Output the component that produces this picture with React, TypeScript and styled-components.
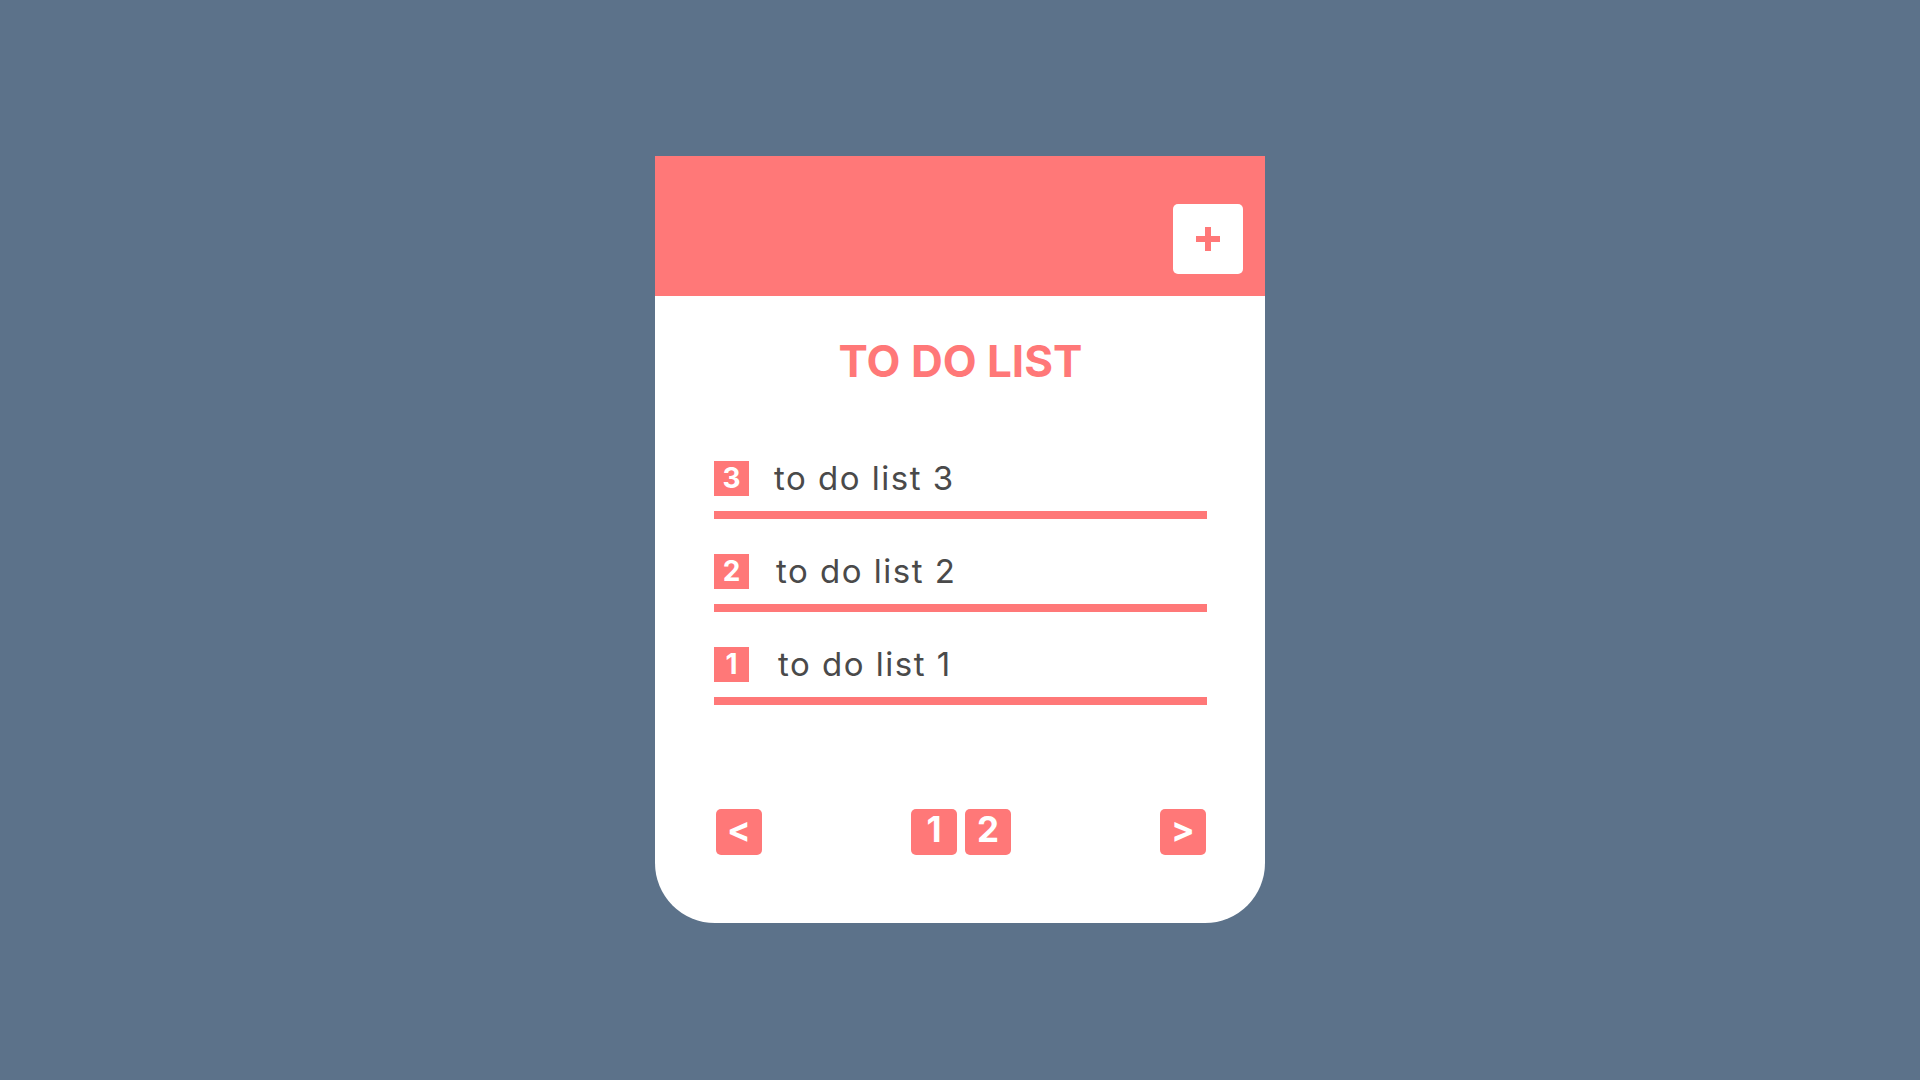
import React from "react";
import styled, { createGlobalStyle } from "styled-components";

const CORAL = "#ff7878";

const Global = createGlobalStyle`
  html, body { margin: 0; padding: 0; }
  body {
    background: #5c728a;
    font-family: Inter, "Noto Sans", sans-serif;
  }
`;

const Page = styled.div`
  min-height: 100vh;
  display: flex;
  align-items: center;
  justify-content: center;
`;

const Card = styled.div`
  width: 610px;
  background: #ffffff;
  border-radius: 0 0 60px 60px;
  overflow: hidden;
  display: flex;
  flex-direction: column;
  margin-top: -1px;
`;

const Header = styled.div`
  height: 140px;
  background: ${CORAL};
  display: flex;
  justify-content: flex-end;
  align-items: flex-end;
  padding: 0 22px 22px 0;
  box-sizing: border-box;
`;

const AddButton = styled.button`
  width: 70px;
  height: 70px;
  border: none;
  border-radius: 5px;
  background: #ffffff;
  padding: 0;
  display: flex;
  align-items: center;
  justify-content: center;
  cursor: pointer;
`;

const Body = styled.div`
  padding: 43px 58px 68px 59px;
  display: flex;
  flex-direction: column;
`;

const Title = styled.h1`
  margin: 0;
  font-size: 44px;
  line-height: 1;
  font-weight: 700;
  color: ${CORAL};
  text-align: center;
`;

const List = styled.ul`
  list-style: none;
  margin: 78px 0 0;
  padding: 0;
  display: flex;
  flex-direction: column;
  gap: 35px;
`;

const Item = styled.li`
  display: flex;
  align-items: center;
  gap: 25px;
  padding-bottom: 15px;
  border-bottom: 8px solid ${CORAL};
`;

const Badge = styled.span`
  width: 35px;
  height: 35px;
  background: ${CORAL};
  color: #ffffff;
  font-size: 28px;
  font-weight: 700;
  line-height: 35px;
  text-align: center;
  flex: none;
`;

const ItemText = styled.span<{ $shift: number }>`
  font-size: 33px;
  line-height: 35px;
  letter-spacing: 1.5px;
  color: #4a4a4a;
  margin-left: ${(p) => p.$shift}px;
`;

const Pager = styled.div`
  margin-top: 104px;
  display: flex;
  align-items: center;
  justify-content: space-between;
  padding: 0 1px 0 2px;
`;

const Pages = styled.div`
  display: flex;
  gap: 8px;
`;

const PageButton = styled.button`
  width: 46px;
  height: 46px;
  border: none;
  border-radius: 5px;
  background: ${CORAL};
  color: #ffffff;
  font-family: Inter, "Noto Sans", sans-serif;
  font-size: 35px;
  font-weight: 700;
  line-height: 41px;
  padding: 0 0 5px;
  cursor: pointer;
`;

const items = [
  { n: 3, text: "to do list 3", shift: 0 },
  { n: 2, text: "to do list 2", shift: 2 },
  { n: 1, text: "to do list 1", shift: 4 },
];

export default function App() {
  return (
    <>
      <Global />
      <Page>
        <Card>
          <Header>
            <AddButton aria-label="add">
              <svg width="24" height="24" viewBox="0 0 24 24">
                <rect x="9" y="0" width="6" height="24" fill={CORAL} />
                <rect x="0" y="9" width="24" height="6" fill={CORAL} />
              </svg>
            </AddButton>
          </Header>
          <Body>
            <Title>TO DO LIST</Title>
            <List>
              {items.map((it) => (
                <Item key={it.n}>
                  <Badge>{it.n}</Badge>
                  <ItemText $shift={it.shift}>{it.text}</ItemText>
                </Item>
              ))}
            </List>
            <Pager>
              <PageButton>&lt;</PageButton>
              <Pages>
                <PageButton>1</PageButton>
                <PageButton>2</PageButton>
              </Pages>
              <PageButton>&gt;</PageButton>
            </Pager>
          </Body>
        </Card>
      </Page>
    </>
  );
}
